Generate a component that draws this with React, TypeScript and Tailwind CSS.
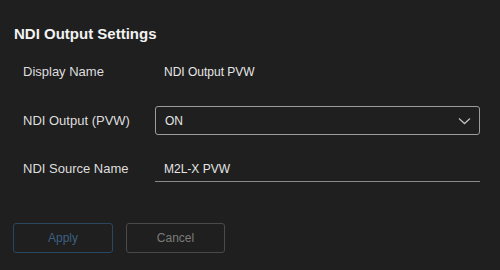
import React from "react";

export default function App() {
  return (
    <div
      className="w-[500px] h-[270px] bg-[#1f1f1f] overflow-hidden flex flex-col"
      style={{ fontFamily: '"Liberation Sans", Arial, sans-serif' }}
    >
      <div className="pt-[23px] pl-[14px] text-[15px] leading-[21px] font-bold text-[#f2f2f2]">
        NDI Output Settings
      </div>

      <div className="mt-[12px] h-[32px] flex items-center">
        <div className="w-[155px] shrink-0 pl-[23px] text-[13px] text-[#dedede]">Display Name</div>
        <div className="pl-[9px] text-[12px] text-[#e6e6e6]">NDI Output PVW</div>
      </div>

      <div className="mt-[18px] h-[29px] flex items-center">
        <div className="w-[155px] shrink-0 pl-[23px] text-[13px] text-[#dedede]">NDI Output (PVW)</div>
        <div className="w-[325px] h-[29px] border border-[#9c9c9c] rounded-[3px] flex items-center justify-between pl-[9px] pr-[8px]">
          <span className="text-[12px] text-[#e6e6e6]">ON</span>
          <svg width="13" height="8" viewBox="0 0 13 8" fill="none">
            <path d="M1 1.5 L6.5 6.5 L12 1.5" stroke="#bdbdbd" strokeWidth="1.3" />
          </svg>
        </div>
      </div>

      <div className="mt-[21px] h-[26px] flex items-center">
        <div className="w-[155px] shrink-0 pl-[23px] text-[13px] text-[#dedede]">NDI Source Name</div>
        <div className="w-[325px] h-[26px] border-b border-[#8a8a8a] flex items-center pl-[9px]">
          <span className="text-[12px] text-[#e6e6e6]">M2L-X PVW</span>
        </div>
      </div>

      <div className="mt-[41px] pl-[13px] flex gap-[13px]">
        <button className="w-[100px] h-[30px] rounded-[3px] border border-[#2a475f] text-[12px] text-[#3b5f80]">
          Apply
        </button>
        <button className="w-[99px] h-[30px] rounded-[3px] border border-[#4a4a4a] text-[12px] text-[#7b7b7b]">
          Cancel
        </button>
      </div>
    </div>
  );
}
